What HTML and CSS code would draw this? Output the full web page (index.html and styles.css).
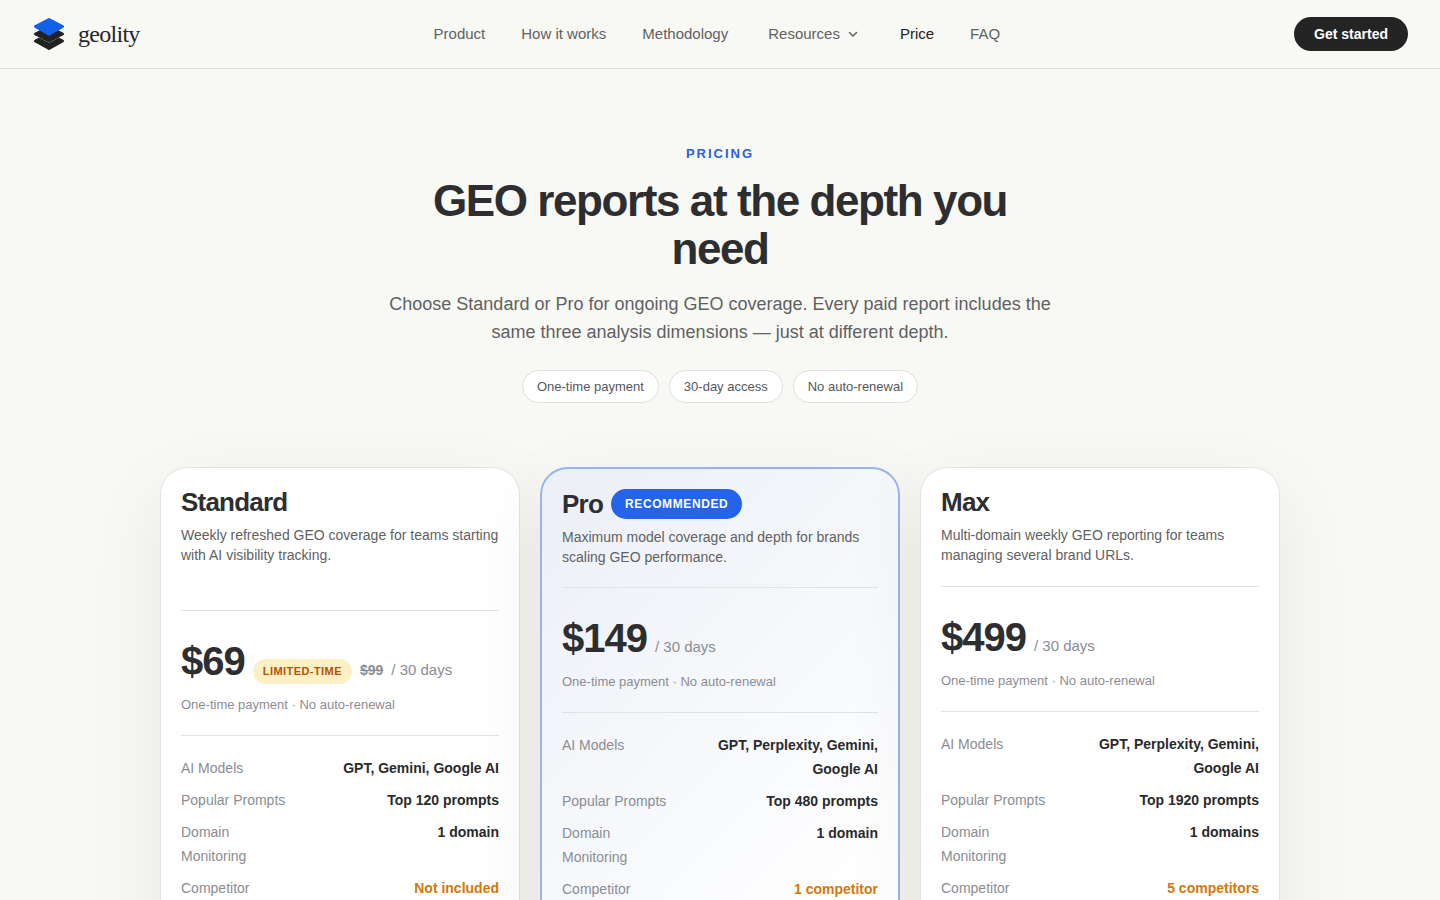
FILE: index.html
```
<!DOCTYPE html>
<html lang="en">

<head>
    <meta charset="UTF-8" />
    <meta name="viewport" content="width=device-width, initial-scale=1.0" />
    <title>Pricing - geolity</title>
    <link rel="stylesheet" href="styles.css">
</head>

<body>
    <header class="header">
        <a href="#" class="logo">
            <svg width="34" height="34" viewBox="0 0 34 34" stroke-linejoin="round" aria-hidden="true">
                <path d="M17 17 L30.500 24 L17 31.500 L3.500 24 Z" fill="#222" stroke="#222" stroke-width="3" />
                <path d="M17 10 L30.500 17 L17 24 L3.500 17 Z" fill="#222" stroke="#222" stroke-width="3" />
                <path d="M5 19.500 L15 24.800 Q17 26 19 24.800 L29 19.500" fill="none" stroke="#b9b6a4" stroke-width="0.600" stroke-dasharray="1.500 1" />
                <path d="M17 2.500 L30.500 9.500 L17 17.300 L3.500 9.500 Z" fill="#1062e8" stroke="#1062e8" stroke-width="3" />
            </svg>
            <span>geolity</span>
        </a>
        <nav class="nav">
            <a href="#">Product</a>
            <a href="#">How it works</a>
            <a href="#">Methodology</a>
            <button type="button" class="nav-menu">
                Resources
                <svg width="14" height="14" viewBox="0 0 14 14" fill="none" stroke="currentColor" stroke-width="1.5" stroke-linecap="round" stroke-linejoin="round" aria-hidden="true">
                    <path d="M3.500 5.500 L7 9 L10.500 5.500" />
                </svg>
            </button>
            <a href="#" class="active">Price</a>
            <a href="#">FAQ</a>
        </nav>
        <button type="button" class="get-started">Get started</button>
    </header>

    <main>
        <section class="hero">
            <p class="eyebrow">PRICING</p>
            <h1>GEO reports at the depth you need</h1>
            <p class="intro">Choose Standard or Pro for ongoing GEO coverage. Every paid report includes the same three analysis dimensions — just at different depth.</p>
            <ul class="chips">
                <li>One-time payment</li>
                <li>30-day access</li>
                <li>No auto-renewal</li>
            </ul>
        </section>

        <section class="plans">
            <article class="plan standard">
                <div class="plan-head">
                    <h2>Standard</h2>
                    <p>Weekly refreshed GEO coverage for teams starting with AI visibility tracking.</p>
                </div>
                <div class="plan-price">
                    <div class="price-row">
                        <strong class="price">$69</strong>
                        <span class="limited">LIMITED-TIME</span>
                        <s class="old-price">$99</s>
                        <span class="period">/ 30 days</span>
                    </div>
                    <p>One-time payment · No auto-renewal</p>
                </div>
                <dl class="features">
                    <div><dt>AI Models</dt><dd>GPT, Gemini, Google AI</dd></div>
                    <div><dt>Popular Prompts</dt><dd>Top 120 prompts</dd></div>
                    <div><dt>Domain Monitoring</dt><dd>1 domain</dd></div>
                    <div><dt>Competitor</dt><dd class="highlight">Not included</dd></div>
                </dl>
            </article>

            <article class="plan pro">
                <div class="plan-head">
                    <div class="plan-title">
                        <h2>Pro</h2>
                        <span class="recommended">RECOMMENDED</span>
                    </div>
                    <p>Maximum model coverage and depth for brands scaling GEO performance.</p>
                </div>
                <div class="plan-price">
                    <div class="price-row">
                        <strong class="price">$149</strong>
                        <span class="period">/ 30 days</span>
                    </div>
                    <p>One-time payment · No auto-renewal</p>
                </div>
                <dl class="features">
                    <div><dt>AI Models</dt><dd>GPT, Perplexity, Gemini, Google AI</dd></div>
                    <div><dt>Popular Prompts</dt><dd>Top 480 prompts</dd></div>
                    <div><dt>Domain Monitoring</dt><dd>1 domain</dd></div>
                    <div><dt>Competitor</dt><dd class="highlight">1 competitor</dd></div>
                </dl>
            </article>

            <article class="plan">
                <div class="plan-head">
                    <h2>Max</h2>
                    <p>Multi-domain weekly GEO reporting for teams managing several brand URLs.</p>
                </div>
                <div class="plan-price">
                    <div class="price-row">
                        <strong class="price">$499</strong>
                        <span class="period">/ 30 days</span>
                    </div>
                    <p>One-time payment · No auto-renewal</p>
                </div>
                <dl class="features">
                    <div><dt>AI Models</dt><dd>GPT, Perplexity, Gemini, Google AI</dd></div>
                    <div><dt>Popular Prompts</dt><dd>Top 1920 prompts</dd></div>
                    <div><dt>Domain Monitoring</dt><dd>1 domains</dd></div>
                    <div><dt>Competitor</dt><dd class="highlight">5 competitors</dd></div>
                </dl>
            </article>
        </section>
    </main>
</body>

</html>
```
FILE: styles.css
```
* {
    box-sizing: border-box;
    margin: 0;
    padding: 0;
}

body {
    font-family: "Liberation Sans", Arial, sans-serif;
    background: #f8f9f5;
    color: #2e2e30;
}

a {
    color: inherit;
    text-decoration: none;
}

button {
    font-family: inherit;
    border: none;
    cursor: pointer;
}

.header {
    display: flex;
    align-items: center;
    justify-content: space-between;
    padding: 17px 32px;
    border-bottom: 1px solid #dcdeda;
}

.logo {
    display: flex;
    align-items: center;
    gap: 12px;
    font-family: "Liberation Serif", "Times New Roman", serif;
    font-size: 24px;
    letter-spacing: -0.03em;
    color: #262626;
}

.nav {
    display: flex;
    align-items: center;
    gap: 36px;
    font-size: 15px;
    line-height: 24px;
    color: #5f6163;
}

.nav .active {
    color: #222;
}

.nav-menu {
    display: flex;
    align-items: center;
    gap: 6px;
    padding: 0 4px;
    background: none;
    font-size: 15px;
    line-height: 24px;
    color: inherit;
}

.get-started {
    height: 34px;
    padding: 0 20px;
    border-radius: 17px;
    background: #242424;
    color: #fff;
    font-size: 14px;
    font-weight: bold;
}

.hero {
    max-width: 680px;
    margin: 0 auto;
    padding: 74px 0 64px;
    text-align: center;
}

.eyebrow {
    margin-bottom: 13px;
    font-size: 13px;
    line-height: 21px;
    font-weight: bold;
    letter-spacing: 2px;
    color: #2b5fdc;
}

h1 {
    margin-bottom: 17px;
    font-size: 44px;
    line-height: 48px;
    letter-spacing: -0.032em;
}

.intro {
    margin-bottom: 24px;
    font-size: 18px;
    line-height: 28px;
    color: #5f6163;
}

.chips {
    display: flex;
    justify-content: center;
    gap: 10px;
    list-style: none;
}

.chips li {
    padding: 0 14px;
    border: 1px solid #dfe0dc;
    border-radius: 17px;
    background: #fff;
    font-size: 13px;
    line-height: 31px;
    color: #55585e;
}

.plans {
    display: grid;
    grid-template-columns: repeat(3, 1fr);
    gap: 20px;
    max-width: 1120px;
    margin: 0 auto;
    padding-bottom: 80px;
}

.plan {
    min-height: 720px;
    padding: 20px;
    border: 1px solid #e3e4e2;
    border-radius: 28px;
    background: #fff;
    box-shadow: 0 24px 80px rgba(20, 24, 20, 0.07);
}

.plan.pro {
    border: 2px solid #98b4e8;
    background: linear-gradient(135deg, #ebeff6, #fff 70%);
}

.plan-head {
    padding-bottom: 21px;
    border-bottom: 1px solid #e0e2e4;
}

.standard .plan-head {
    padding-bottom: 45px;
}

.pro .plan-head {
    padding-bottom: 20px;
}

.plan-title {
    display: flex;
    align-items: center;
    gap: 8px;
}

h2 {
    font-size: 26px;
    line-height: 29px;
    letter-spacing: -0.03em;
}

.recommended {
    padding: 0 14px;
    border-radius: 15px;
    background: #2563eb;
    color: #fff;
    font-size: 12px;
    line-height: 30px;
    font-weight: bold;
    letter-spacing: 0.05em;
}

.plan-head p {
    margin-top: 8px;
    font-size: 14px;
    line-height: 20px;
    color: #5f6163;
}

.plan-price {
    padding: 24px 0 20px;
    border-bottom: 1px solid #e0e2e4;
}

.price-row {
    display: flex;
    align-items: baseline;
    gap: 8px;
}

.price {
    font-size: 40px;
    line-height: 52px;
    letter-spacing: -1px;
}

.limited {
    padding: 4px 10px;
    border-radius: 13px;
    background: #fdf0c4;
    color: #b45309;
    font-size: 11px;
    line-height: 17px;
    font-weight: bold;
    letter-spacing: 0.04em;
}

.old-price {
    font-size: 14px;
    font-weight: bold;
    color: #8b8d93;
}

.period {
    font-size: 15px;
    color: #8b8d93;
}

.plan-price p {
    margin-top: 7px;
    font-size: 13px;
    line-height: 21px;
    color: #8b8d93;
}

.features {
    display: grid;
    gap: 8px;
    padding-top: 20px;
    font-size: 14px;
    line-height: 24px;
}

.features div {
    display: grid;
    grid-template-columns: 110px 1fr;
    gap: 16px;
}

.features dt {
    color: #8b8d93;
}

.features dd {
    text-align: right;
    font-weight: bold;
    color: #2a2a2c;
}

.features .highlight {
    color: #d4780c;
}
```
